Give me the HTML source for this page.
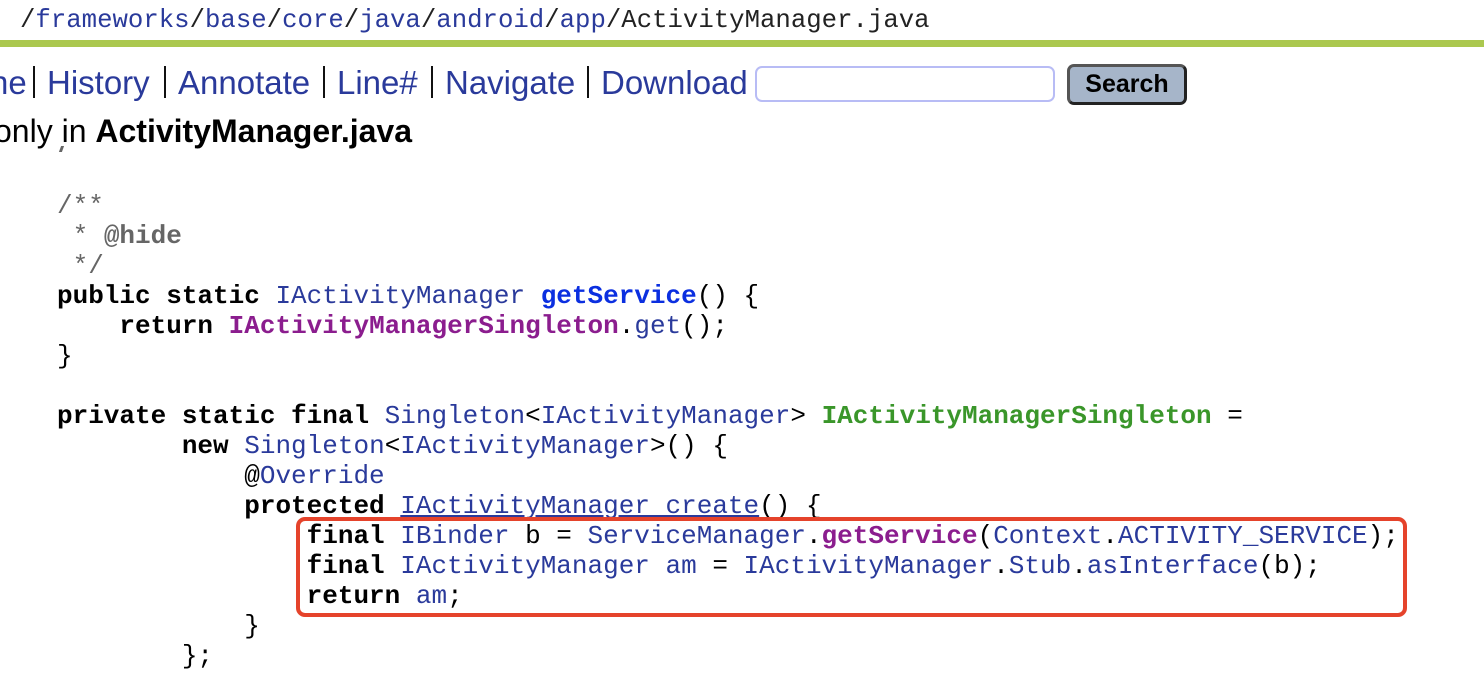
<!DOCTYPE html>
<html><head><meta charset="utf-8"><style>
body{margin:0;width:1484px;height:682px;overflow:hidden;background:#fff;position:relative;font-family:"Liberation Sans",sans-serif}
.a{position:absolute;white-space:pre}
.path{left:20px;top:6px;font:25.7px/30px "Liberation Mono",monospace;color:#222}
.path a{color:#2a3a9b;text-decoration:none}
.bar{left:0;top:40px;width:1484px;height:7px;background:#abc84f}
.nav{top:63px;font-size:33px;line-height:40px;color:#2a3a9b}
.sep{position:absolute;top:66px;width:2px;height:32px;background:#111}
.inp{left:755px;top:66px;width:300px;height:36px;border:2px solid #b8bcf5;border-radius:7px;box-sizing:border-box}
.btn{left:1067px;top:64px;width:120px;height:41px;box-sizing:border-box;border:3px solid #555;border-bottom-color:#222;border-right-color:#222;border-radius:7px;background:#a6b5c9;font-weight:bold;font-size:25px;text-align:center;line-height:35px;color:#000}
.code{left:57px;top:191px;font:26px/30px "Liberation Mono",monospace;color:#000;margin:0}
b{font-weight:bold}
.k{font-weight:bold;color:#000}.t{color:#2a3a9b}.c{color:#666}.cb{color:#666;font-weight:bold}
.p{color:#8b1d8e;font-weight:bold}.g{color:#3a962a;font-weight:bold}.bl{color:#0b2fe0;font-weight:bold}
.box{left:296px;top:517px;width:1111px;height:100px;box-sizing:border-box;border:4px solid #e5432b;border-radius:9px}
</style></head><body>
<div class="a path">/<a>frameworks</a>/<a>base</a>/<a>core</a>/<a>java</a>/<a>android</a>/<a>app</a>/ActivityManager.java</div>
<div class="a bar"></div>
<div class="a nav" style="left:-10px">ne</div>
<div class="sep" style="left:33px"></div>
<div class="a nav" style="left:47px">History</div>
<div class="sep" style="left:164px"></div>
<div class="a nav" style="left:178px">Annotate</div>
<div class="sep" style="left:323px"></div>
<div class="a nav" style="left:337px">Line#</div>
<div class="sep" style="left:431px"></div>
<div class="a nav" style="left:445px">Navigate</div>
<div class="sep" style="left:587px"></div>
<div class="a nav" style="left:601px">Download</div>
<div class="a inp"></div>
<div class="a btn">Search</div>
<div class="a" style="left:-6px;top:111px;font-size:32px;line-height:40px;color:#000">only in <b>ActivityManager.java</b></div>
<div class="a" style="left:60px;top:146px;width:3px;height:6px;background:#666;transform:skewX(-20deg)"></div>
<pre class="a code"><span class="c">/**</span>
<span class="c"> * </span><span class="cb">@hide</span>
<span class="c"> */</span>
<span class="k">public static</span> <span class="t">IActivityManager</span> <span class="bl">getService</span>() {
    <span class="k">return</span> <span class="p">IActivityManagerSingleton</span>.<span class="t">get</span>();
}

<span class="k">private static final</span> <span class="t">Singleton</span>&lt;<span class="t">IActivityManager</span>&gt; <span class="g">IActivityManagerSingleton</span> =
        <span class="k">new</span> <span class="t">Singleton</span>&lt;<span class="t">IActivityManager</span>&gt;() {
            @<span class="t">Override</span>
            <span class="k">protected</span> <span class="t" style="text-decoration:underline">IActivityManager create</span>() {
                <span class="k">final</span> <span class="t">IBinder</span> b = <span class="t">ServiceManager</span>.<span class="p">getService</span>(<span class="t">Context</span>.<span class="t">ACTIVITY_SERVICE</span>);
                <span class="k">final</span> <span class="t">IActivityManager</span> <span class="t">am</span> = <span class="t">IActivityManager</span>.<span class="t">Stub</span>.<span class="t">asInterface</span>(b);
                <span class="k">return</span> <span class="t">am</span>;
            }
        };</pre>
<div class="a box"></div>
</body></html>
